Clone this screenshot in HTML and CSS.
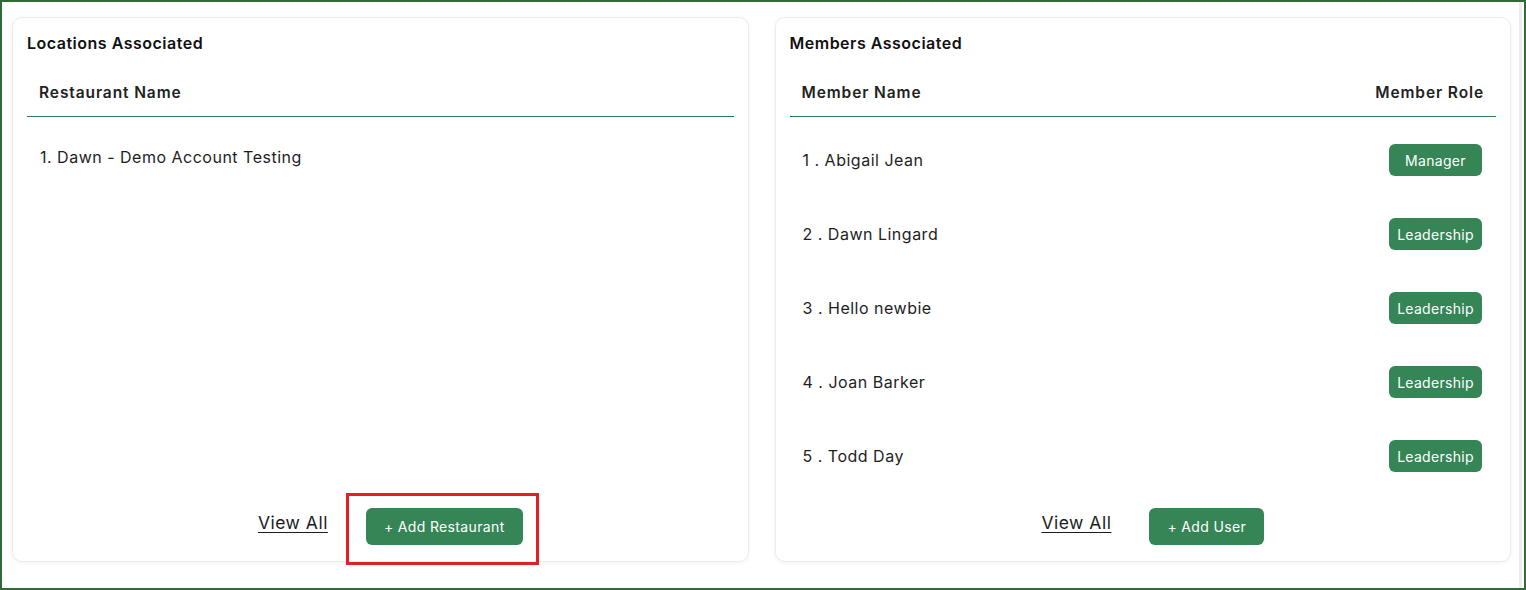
FILE: index.html
```html
<!DOCTYPE html>
<html>
<head>
<meta charset="utf-8">
<link rel="stylesheet" href="styles.css">
</head>
<body>
<div class="frame">
  <div class="inner">
    <section class="card">
      <h2 class="card-title">Locations Associated</h2>
      <div class="table-head">
        <span>Restaurant Name</span>
      </div>
      <ul class="list list-locations">
        <li class="row-loc">1. Dawn - Demo Account Testing</li>
      </ul>
      <div class="footer">
        <a class="view-all" href="#">View All</a>
        <span class="btn-wrap">
          <button class="btn">+ Add Restaurant</button>
          <span class="highlight"></span>
        </span>
      </div>
    </section>
    <section class="card">
      <h2 class="card-title">Members Associated</h2>
      <div class="table-head">
        <span>Member Name</span>
        <span>Member Role</span>
      </div>
      <ul class="list list-members">
        <li class="row-member"><span>1 . Abigail Jean</span><span class="badge">Manager</span></li>
        <li class="row-member"><span>2 . Dawn Lingard</span><span class="badge">Leadership</span></li>
        <li class="row-member"><span>3 . Hello newbie</span><span class="badge">Leadership</span></li>
        <li class="row-member"><span>4 . Joan Barker</span><span class="badge">Leadership</span></li>
        <li class="row-member"><span>5 . Todd Day</span><span class="badge">Leadership</span></li>
      </ul>
      <div class="footer">
        <a class="view-all" href="#">View All</a>
        <span class="btn-wrap">
          <button class="btn">+ Add User</button>
        </span>
      </div>
    </section>
  </div>
</div>
</body>
</html>
```
FILE: styles.css
```css
* { box-sizing: border-box; }
html, body { margin: 0; padding: 0; background: #fff; }
body {
  font-family: "Inter", "Open Sans", sans-serif;
  color: #1c1c1c;
}
.frame {
  width: 1526px;
  height: 590px;
  border: 2px solid #2f6b36;
  padding: 0 2px 0 0;
}
.inner {
  height: 100%;
  border-right: 3px solid #ededed;
  padding: 15px 8px 26px 10px;
  display: flex;
  gap: 26px;
}
.card {
  flex: 1;
  background: #fff;
  border: 1px solid #ececec;
  border-radius: 10px;
  box-shadow: 0 1px 4px rgba(0,0,0,0.06);
  padding: 13px 14px 16px 14px;
  display: flex;
  flex-direction: column;
}
.card-title {
  margin: 0 0 14px 0;
  font-size: 16px;
  line-height: 24px;
  font-weight: 600;
  letter-spacing: 0.5px;
  color: #111;
}
.table-head {
  display: flex;
  justify-content: space-between;
  padding: 12px 12px 11px 12px;
  line-height: 24px;
  font-size: 15.5px;
  font-weight: 600;
  letter-spacing: 0.9px;
  color: #222;
  border-bottom: 1px solid #2b7d48;
}
.list {
  list-style: none;
  margin: 0;
  padding: 0;
  font-size: 16px;
  letter-spacing: 0.5px;
  color: #1e1e1e;
}
.list-locations { padding-top: 28px; }
.row-loc { padding: 0 13px; line-height: 24px; }
.list-members { padding-top: 6px; }
.row-member {
  height: 74px;
  display: flex;
  align-items: center;
  justify-content: space-between;
  padding: 0 14px 0 13px;
}
.badge {
  width: 93px;
  height: 32px;
  border-radius: 6px;
  background: #358556;
  color: #fff;
  font-size: 14px;
  letter-spacing: 0.3px;
  display: flex;
  align-items: center;
  justify-content: center;
}
.footer {
  margin-top: auto;
  display: flex;
  justify-content: center;
  align-items: center;
  gap: 38px;
  padding-left: 20px;
}
.view-all {
  color: #1c1c1c;
  font-size: 17.5px;
  letter-spacing: 0.5px;
  text-decoration: underline;
  text-underline-offset: 3px;
  margin-top: -8px;
}
.btn-wrap { position: relative; display: inline-block; }
.btn {
  height: 37px;
  border: none;
  border-radius: 6px;
  background: #358556;
  color: #fff;
  font-family: inherit;
  font-size: 14px;
  letter-spacing: 0.35px;
  padding: 0 18px;
  display: block;
}
.highlight {
  position: absolute;
  left: -20px;
  right: -16px;
  top: -15px;
  bottom: -20px;
  border: 3px solid #e11f26;
  pointer-events: none;
}
```
